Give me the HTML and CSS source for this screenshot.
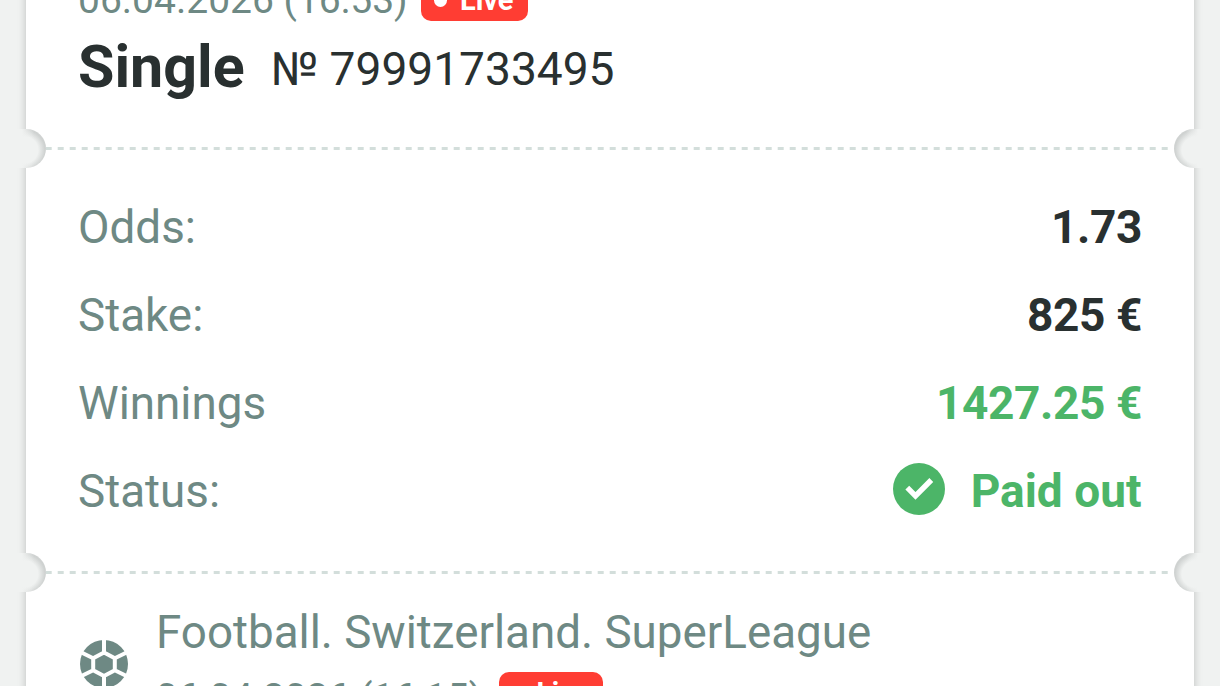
FILE: index.html
```html
<!DOCTYPE html>
<html lang="en">
<head>
<meta charset="utf-8">
<title>Bet slip</title>
<link rel="stylesheet" href="styles.css">
</head>
<body>
<main class="slip">
  <header class="head">
    <div class="meta"><span class="date">06.04.2026 (16:53)</span><span class="live"><i class="dot"></i>Live</span></div>
    <div class="title"><h1 class="kind">Single</h1><span class="number">№ 79991733495</span></div>
  </header>
  <div class="seam"><i class="notch left"></i><svg class="dash" width="1128" height="3"><path d="M-.3 1.5H1122" stroke="#d3dedb" stroke-width="3" stroke-dasharray="6 6"/></svg><i class="notch right"></i></div>
  <section class="rows">
    <div class="row"><span class="label">Odds:</span><b class="value amount">1.73</b></div>
    <div class="row"><span class="label">Stake:</span><b class="value amount">825 €</b></div>
    <div class="row"><span class="label">Winnings</span><b class="value amount win">1427.25 €</b></div>
    <div class="row"><span class="label">Status:</span><b class="value win"><svg class="check" width="52" height="52" viewBox="0 0 52 52"><circle cx="26" cy="26" r="26" fill="#4cb568"/><path d="M14.3 24.6L22.5 32.9L38.3 17" fill="none" stroke="#fff" stroke-width="5.4"/></svg><span class="paid">Paid out</span></b></div>
  </section>
  <div class="seam"><i class="notch left"></i><svg class="dash" width="1128" height="3"><path d="M-.3 1.5H1122" stroke="#d3dedb" stroke-width="3" stroke-dasharray="6 6"/></svg><i class="notch right"></i></div>
  <section class="event">
    <svg class="ball" width="48" height="48" viewBox="0 0 48 48"><circle cx="24" cy="24" r="24" fill="#6e8984"/><g fill="none" stroke="#fff" stroke-width="4"><path d="M24 12.4L34.8 18.2V30.2L24 36L13.2 30.2V18.2ZM24 12.4V-1M24 36V49M34.8 18.2L48 11.8M34.8 30.2L48 36.6M13.2 18.2L0 11.8M13.2 30.2L0 36.6"/></g></svg>
    <div class="info">
      <div class="league">Football. Switzerland. SuperLeague</div>
      <div class="meta small"><span class="date">06.04.2026 (16:15)</span><span class="live"><i class="dot"></i>Live</span></div>
    </div>
  </section>
</main>
</body>
</html>
```
FILE: styles.css
```css
* { box-sizing: border-box; }
body { margin: 0; height: 686px; overflow: hidden; background: #f0f2f1; font-family: Roboto, "Liberation Sans", sans-serif; color: #293030; }
.slip { width: 1168px; height: 726px; margin: -20px auto 0; padding-top: 20px; background: #fff; box-shadow: 0 0 8px rgba(0,0,0,.22); }
.head { display: flow-root; height: 129px; padding: 0 52px; }
.meta { display: flex; height: 41px; margin-top: -20px; gap: 14px; color: #6e8984; font-size: 39px; line-height: 41px; }
.date { width: 329px; white-space: nowrap; }
.live { display: flex; align-items: center; gap: 13px; width: 107px; height: 41px; padding-left: 13px; border-radius: 10px; background: #ff3d33; color: #fff; font-size: 29px; font-weight: 700; line-height: 37px; }
.dot { width: 13px; height: 13px; margin-top: -1px; border-radius: 50%; background: #fff; }
.title { display: flex; align-items: center; height: 92px; gap: 26px; }
.kind { margin: 0; font-size: 59.2px; line-height: 92px; font-weight: 700; }
.number { padding-top: 3px; font-size: 46.1px; white-space: nowrap; }
.seam { display: flex; align-items: center; justify-content: space-between; height: 39px; margin: 0 -26px; }
.dash { display: block; }
.notch { flex: none; width: 30px; height: 39px; }
.left { margin-left: 16px; border-radius: 0 20px 20px 0; background: linear-gradient(90deg, #f0f2f1 6px, rgba(240,242,241,0) 18px), radial-gradient(circle 20px at 9px 21px, #f0f2f1 65%, #cfd2d1 100%); }
.right { margin-right: 16px; border-radius: 20px 0 0 20px; background: linear-gradient(270deg, #f0f2f1 6px, rgba(240,242,241,0) 18px), radial-gradient(circle 20px at 21px 21px, #f0f2f1 65%, #cfd2d1 100%); }
.rows { height: 385px; padding: 15px 52px 0; }
.row { display: flex; align-items: center; justify-content: space-between; height: 88px; font-size: 46px; }
.label { color: #6e8984; font-size: 45.8px; }
.value { display: flex; align-items: center; gap: 26px; font-weight: 700; }
.amount { letter-spacing: -.4px; }
.paid { margin-right: .5px; }
.win { color: #4cb568; }
.check { display: block; margin-top: -5px; }
.event { display: flex; gap: 28px; padding: 11px 53px 0 54px; color: #6e8984; }
.ball { flex: none; margin-top: 37px; }
.league { height: 60px; font-size: 45.75px; line-height: 60px; white-space: nowrap; }
.small { margin-top: 9px; gap: 16.5px; font-size: 38.6px; }
.small .date { width: 326px; padding-top: 5px; }
.small .live { width: 104px; padding-left: 12px; font-size: 28px; line-height: 45px; }
.small .dot { margin-top: 5px; }
```
